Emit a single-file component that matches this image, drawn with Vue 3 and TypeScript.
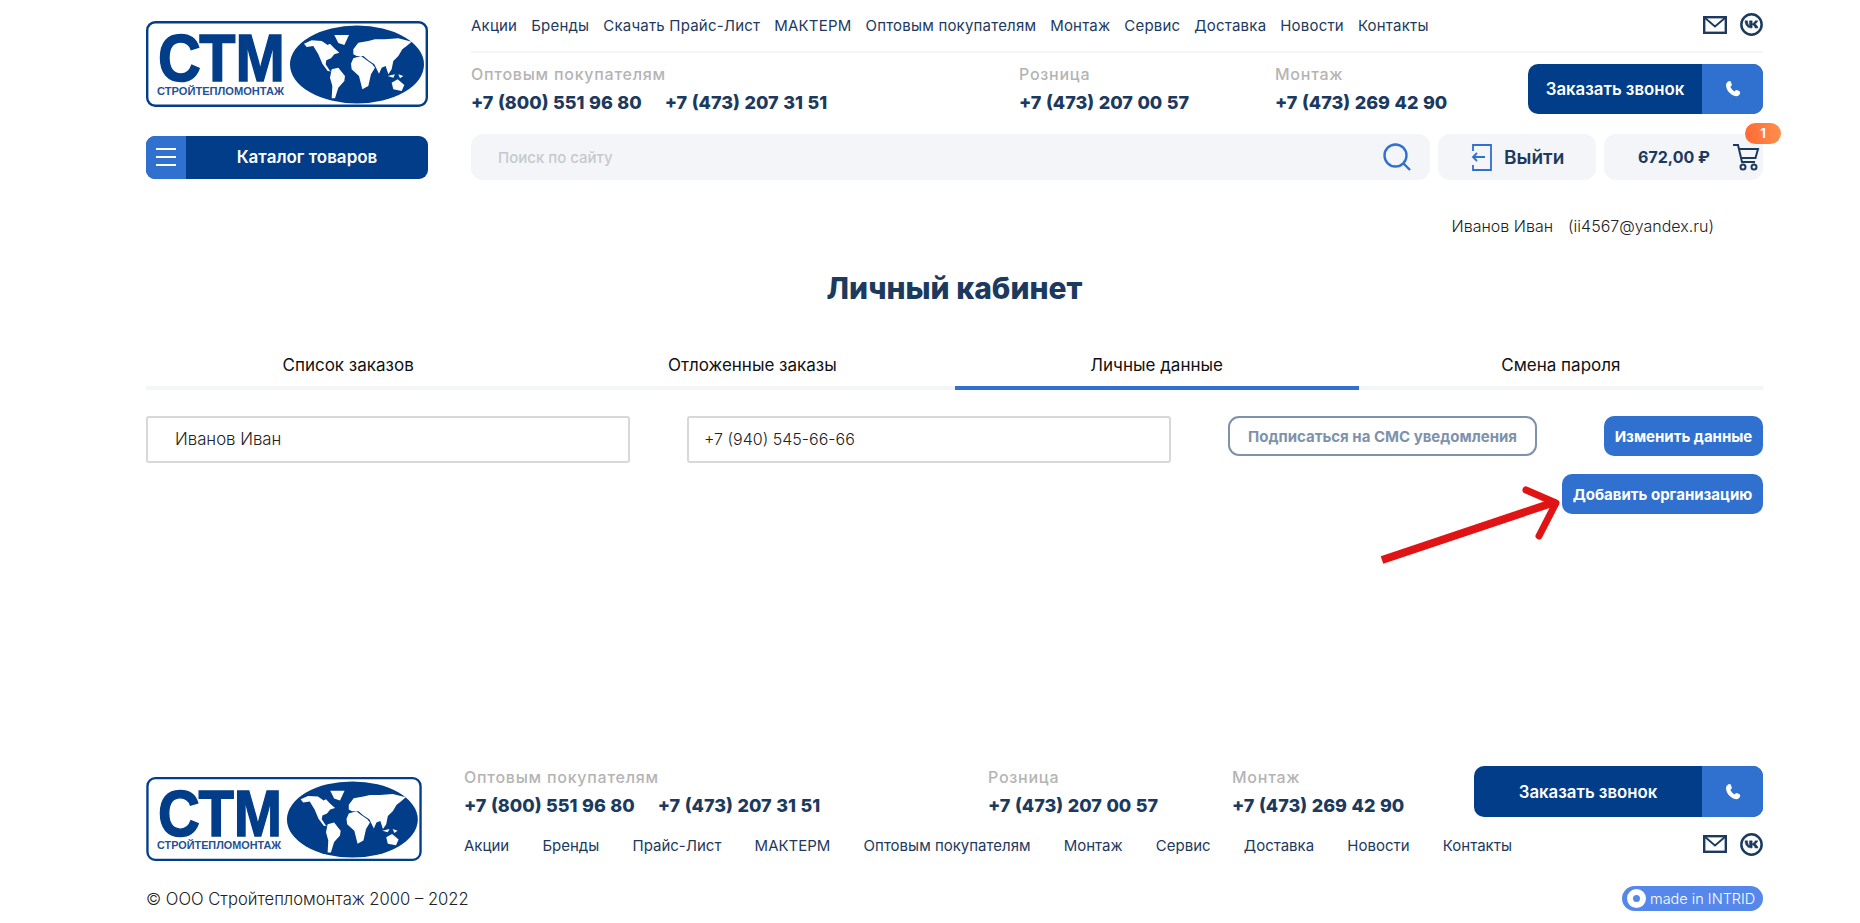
<script setup lang="ts">
const topNav = ['Акции', 'Бренды', 'Скачать Прайс-Лист', 'МАКТЕРМ', 'Оптовым покупателям', 'Монтаж', 'Сервис', 'Доставка', 'Новости', 'Контакты'];
const footNav = ['Акции', 'Бренды', 'Прайс-Лист', 'МАКТЕРМ', 'Оптовым покупателям', 'Монтаж', 'Сервис', 'Доставка', 'Новости', 'Контакты'];
const tabs = ['Список заказов', 'Отложенные заказы', 'Личные данные', 'Смена пароля'];
const activeTab = 2;
</script>

<template>
<div class="page">
  <svg class="defs" aria-hidden="true">
    <symbol id="mail" viewBox="0 0 24 18">
      <rect x="1.200" y="1.200" width="21.600" height="15.600" fill="none" stroke="#1c3a5e" stroke-width="2.400" />
      <path d="M1.500 1.500 12 10.500 22.500 1.500" fill="none" stroke="#1c3a5e" stroke-width="1.800" />
    </symbol>
    <symbol id="vk" viewBox="0 0 24 24">
      <circle cx="12" cy="12" r="10.600" fill="none" stroke="#1c3a5e" stroke-width="2.600" />
      <path d="M5.200 8.200c.3 4.900 2.700 7.500 6.900 7.500h.6V12.300c1.400.2 2.500 1.500 3.100 3.400h3c-.6-2.500-2-3.600-3-4.100 1-.6 2.300-1.800 2.800-3.400h-2.800c-.5 1.500-1.600 2.700-3.100 3V8.200H9.900v5.200c-1.300-.4-1.900-2.600-2-5.200z" fill="#1c3a5e" stroke="#1c3a5e" stroke-width=".5" />
    </symbol>
    <symbol id="phone" viewBox="0 0 18 18">
      <path d="M4.600 1.200c1.200-.5 2 .1 2.400 1.100l.7 1.900c.3.800.1 1.400-.5 1.900l-.8.700c.7 1.800 2.300 3.700 4.200 4.600l.9-.9c.5-.5 1.200-.6 1.800-.3l1.800.9c1 .5 1.300 1.300.9 2.300-.7 1.800-2.200 3-4 2.800C7 15.600 2.300 10.500 2 5.500c-.1-1.900 1-3.600 2.600-4.300z" fill="#fff" />
    </symbol>
  </svg>

  <header class="head">
    <div class="head-top">
      <svg class="logo" viewBox="0 0 282 86">
        <g id="logo">
          <rect x="1.2" y="1.2" width="279.6" height="83.6" rx="8" fill="#fff" stroke="#023d89" stroke-width="2.4" />
          <text x="12" y="60" class="logo-big" textLength="127" lengthAdjust="spacingAndGlyphs">СТМ</text>
          <text x="11" y="74" class="logo-small" textLength="127" lengthAdjust="spacingAndGlyphs">СТРОЙТЕПЛОМОНТАЖ</text>
          <ellipse cx="211" cy="43.500" rx="67" ry="39" fill="#023d89" />
          <g transform="translate(139 0) scale(.3333)" fill="#fff">
            <polygon points="57,68 80,58 110,60 128,72 135,68 148,82 163,95 148,100 138,112 124,118 122,130 135,150 143,152 128,150 112,128 100,100 85,75 65,78" />
            <polygon points="148,42 192,42 178,72 160,66" />
            <polygon points="140,145 160,140 180,165 178,180 160,200 150,232 140,232 142,195 135,170" />
            <polygon points="205,112 228,105 245,118 262,130 270,140 258,160 250,195 232,205 222,165 200,145 198,128" />
            <polygon points="205,85 220,65 250,60 270,55 300,55 340,52 380,62 365,75 352,85 340,105 325,120 320,145 310,160 302,135 290,140 282,158 268,130 250,118 235,105 215,105 205,100" />
            <polygon points="308,165 330,160 325,170" />
            <polygon points="340,160 355,165 345,172" />
            <polygon points="320,185 338,175 358,192 350,210 325,205" />
          </g>
        </g>
      </svg>
      <div class="head-info">
        <div class="nav-row">
          <nav class="top-nav">
            <a v-for="item in topNav" :key="item">{{ item }}</a>
          </nav>
          <div class="socials">
            <svg class="ic-mail"><use href="#mail" /></svg>
            <svg class="ic-vk"><use href="#vk" /></svg>
          </div>
        </div>
        <div class="contacts">
          <div class="contact c1">
            <span class="lbl">Оптовым покупателям</span>
            <div class="phones"><b>+7 (800) 551 96 80</b><b>+7 (473) 207 31 51</b></div>
          </div>
          <div class="contact c2">
            <span class="lbl">Розница</span>
            <div class="phones"><b>+7 (473) 207 00 57</b></div>
          </div>
          <div class="contact c3">
            <span class="lbl">Монтаж</span>
            <div class="phones"><b>+7 (473) 269 42 90</b></div>
          </div>
          <button class="call">
            <span class="call-text">Заказать звонок</span>
            <span class="call-ic"><svg><use href="#phone" /></svg></span>
          </button>
        </div>
      </div>
    </div>

    <div class="head-bottom">
      <button class="catalog">
        <span class="burger"><i></i><i></i><i></i></span>
        <span class="catalog-text">Каталог товаров</span>
      </button>
      <div class="search">
        <span>Поиск по сайту</span>
        <svg width="30" height="30" viewBox="0 0 30 30" fill="none" stroke="#3070ce" stroke-width="2.400">
          <circle cx="13.500" cy="13.500" r="11" />
          <path d="M21.500 21.500 28 28" />
        </svg>
      </div>
      <div class="grey-box logout">
        <svg width="22" height="28" viewBox="0 0 22 28" fill="none" stroke="#3070ce" stroke-width="1.800">
          <path d="M2 8V2h18v25H2v-5" />
          <path d="M14 14H2M6 10l-4 4 4 4" />
        </svg>
        <span>Выйти</span>
      </div>
      <div class="grey-box cart">
        <span class="sum">672,00 ₽</span>
        <svg width="28" height="28" viewBox="0 0 28 28" fill="none" stroke="#1c3a5e" stroke-width="2">
          <path d="M1 2h5l4 17h13" />
          <path d="M7 6h19l-2.500 9H9" />
          <circle cx="11" cy="24" r="2.500" />
          <circle cx="22" cy="24" r="2.500" />
        </svg>
        <span class="badge">1</span>
      </div>
    </div>
  </header>

  <main class="main">
    <div class="user"><span>Иванов Иван</span><span>(ii4567@yandex.ru)</span></div>
    <h1>Личный кабинет</h1>
    <div class="tabs">
      <div
        v-for="(tab, i) in tabs" :key="tab"
        :class="i === activeTab ? 'tab tab_active' : 'tab'"
      >{{ tab }}</div>
    </div>
    <div class="form">
      <div class="field field-name">Иванов Иван</div>
      <div class="field field-phone">+7 (940) 545-66-66</div>
      <button class="sms">Подписаться на СМС уведомления</button>
      <div class="actions">
        <button class="btn btn-change">Изменить данные</button>
        <button class="btn btn-add">Добавить организацию</button>
        <svg class="arrow" width="190" height="85" viewBox="0 0 190 85" fill="none" stroke="#e01414" stroke-linecap="round">
          <path d="M2 75 172 18" stroke-width="8" stroke-linecap="butt" />
          <path d="M146 5 176 18 159 51" stroke-width="7" stroke-linejoin="round" />
        </svg>
      </div>
    </div>
  </main>

  <footer class="foot">
    <div class="foot-top">
      <svg class="logo-foot" viewBox="0 0 282 86"><use href="#logo" /></svg>
      <div class="foot-info">
        <div class="contacts contacts-foot">
          <div class="contact c1">
            <span class="lbl">Оптовым покупателям</span>
            <div class="phones"><b>+7 (800) 551 96 80</b><b>+7 (473) 207 31 51</b></div>
          </div>
          <div class="contact c2">
            <span class="lbl">Розница</span>
            <div class="phones"><b>+7 (473) 207 00 57</b></div>
          </div>
          <div class="contact c3">
            <span class="lbl">Монтаж</span>
            <div class="phones"><b>+7 (473) 269 42 90</b></div>
          </div>
          <button class="call">
            <span class="call-text">Заказать звонок</span>
            <span class="call-ic"><svg><use href="#phone" /></svg></span>
          </button>
        </div>
        <div class="foot-nav-row">
          <nav class="foot-nav">
            <a v-for="item in footNav" :key="item">{{ item }}</a>
          </nav>
          <div class="socials">
            <svg class="ic-mail"><use href="#mail" /></svg>
            <svg class="ic-vk"><use href="#vk" /></svg>
          </div>
        </div>
      </div>
    </div>
    <div class="foot-bottom">
      <span class="copy">© ООО Стройтепломонтаж 2000 – 2022</span>
      <span class="intrid"><i></i>made in INTRID</span>
    </div>
  </footer>
</div>
</template>

<style>
html, body {
  background: #fff;
  overflow: hidden;
}

/* the footer logo reuses these through <use>, scoped selectors don't reach it */
.logo-big {
  font: 700 67px "Liberation Sans", sans-serif;
  fill: #023d89;
  stroke: #023d89;
  stroke-width: 1.500px;
}

.logo-small {
  font: 700 11px "Liberation Sans", sans-serif;
  fill: #1f5296;
}
</style>

<style scoped>
.page {
  width: 1617px;
  height: 923px;
  margin-left: 146px;
  font-family: Inter, "Noto Sans", sans-serif;
  color: #1c3a5e;
  display: flex;
  flex-direction: column;
}

.defs {
  position: absolute;
  width: 0;
  height: 0;
}

button {
  font-family: inherit;
  border: 0;
  padding: 0;
}

.head-top {
  display: flex;
  gap: 43px;
}

.logo {
  width: 282px;
  height: 86px;
  margin-top: 21px;
  flex: none;
}

.head-info {
  flex: 1;
}

.nav-row {
  height: 51px;
  border-bottom: 2px solid #f3f5f8;
  display: flex;
  justify-content: space-between;
  align-items: center;
}

.top-nav {
  display: flex;
  gap: 14px;
  font-size: 15px;
  letter-spacing: .2px;
}

.socials {
  display: flex;
  align-items: center;
  gap: 13px;
  padding-bottom: 2px;
}

.ic-mail {
  width: 24px;
  height: 18px;
}

.ic-vk {
  width: 23px;
  height: 23px;
}

.contacts {
  display: flex;
  margin-top: 11px;
}

.contact {
  display: flex;
  flex-direction: column;
  gap: 8px;
}

.c1 { width: 548px; }
.c2 { width: 256px; }
.c3 { flex: 1; }

.lbl {
  color: #b4b4b4;
  font-size: 16px;
  font-weight: 500;
  line-height: 20px;
  letter-spacing: .75px;
}

.phones {
  display: flex;
  gap: 23px;
  font-size: 18px;
  line-height: 22px;
  word-spacing: .6px;
  white-space: nowrap;
}

.phones b {
  font-weight: 800;
}

.call {
  width: 235px;
  height: 50px;
  display: flex;
  border-radius: 10px;
  overflow: hidden;
  color: #fff;
  font-size: 16.800px;
  font-weight: 600;
  background: #023d89;
}

.call-text {
  flex: 1;
  align-self: center;
}

.call-ic {
  width: 61px;
  background: #3070ce;
  display: flex;
  align-items: center;
  justify-content: center;
}

.call-ic svg {
  width: 18px;
  height: 18px;
}

.head-bottom {
  display: flex;
  margin-top: 20px;
  height: 46px;
  align-items: center;
}

.catalog {
  width: 282px;
  height: 43px;
  margin-right: 43px;
  display: flex;
  border-radius: 9px;
  overflow: hidden;
  background: #023d89;
  color: #fff;
  font-size: 17px;
  font-weight: 600;
}

.burger {
  width: 40px;
  background: #3070ce;
  display: flex;
  flex-direction: column;
  align-items: center;
  justify-content: center;
  gap: 6px;
}

.burger i {
  width: 20px;
  height: 2px;
  background: #fff;
}

.catalog-text {
  flex: 1;
  align-self: center;
}

.search {
  width: 959px;
  height: 46px;
  margin-right: 8px;
  padding: 0 18px 0 27px;
  box-sizing: border-box;
  background: #f3f5f8;
  border-radius: 12px;
  display: flex;
  align-items: center;
  justify-content: space-between;
  color: #c5c9cf;
  font-size: 15px;
  font-weight: 500;
}

.grey-box {
  height: 46px;
  background: #f3f5f8;
  border-radius: 12px;
  display: flex;
  align-items: center;
  box-sizing: border-box;
  position: relative;
}

.logout {
  width: 158px;
  margin-right: 8px;
  padding-left: 33px;
  gap: 11px;
  font-size: 19px;
  font-weight: 600;
}

.cart {
  width: 159px;
  padding-left: 34px;
  gap: 22px;
}

.sum {
  font-size: 16px;
  font-weight: 700;
  white-space: nowrap;
}

.badge {
  position: absolute;
  top: -11px;
  right: -18px;
  width: 36px;
  height: 21px;
  border-radius: 11px;
  background: linear-gradient(90deg, #ff6a33, #ff8f4d);
  color: #fff;
  font-size: 13px;
  font-weight: 700;
  text-align: center;
  line-height: 21px;
}

.main {
  flex: 1;
}

.user {
  margin-top: 36px;
  padding-right: 49px;
  display: flex;
  justify-content: flex-end;
  gap: 15px;
  font-size: 16px;
  line-height: 20px;
  font-weight: 300;
  color: #222;
}

h1 {
  margin: 34px 0 0;
  text-align: center;
  font-size: 30px;
  line-height: 36px;
  font-weight: 800;
  color: #1c3a5e;
}

.tabs {
  display: grid;
  grid-template-columns: repeat(4, 1fr);
  margin-top: 39px;
  border-bottom: 4px solid #f4f5f6;
}

.tab {
  height: 41px;
  margin-bottom: -4px;
  border-bottom: 4px solid transparent;
  text-align: center;
  color: #111;
  font-size: 17px;
  line-height: 40px;
}

.tab_active {
  border-bottom-color: #3070ce;
}

.form {
  display: flex;
  margin-top: 26px;
  align-items: flex-start;
}

.field {
  width: 484px;
  height: 47px;
  box-sizing: border-box;
  border: 2px solid #d8d8d8;
  border-radius: 3px;
  font-weight: 300;
  line-height: 43px;
  color: #222;
}

.field-name {
  padding-left: 27px;
  margin-right: 57px;
  font-size: 16.800px;
}

.field-phone {
  padding-left: 15px;
  margin-right: 57px;
  font-size: 16px;
}

.sms {
  width: 309px;
  height: 40px;
  box-sizing: border-box;
  border: 2px solid #7e92ac;
  border-radius: 11px;
  background: #fff;
  color: #7e92ac;
  font-size: 15px;
  font-weight: 700;
}

.actions {
  flex: 1;
  display: flex;
  flex-direction: column;
  align-items: flex-end;
  gap: 18px;
  position: relative;
}

.btn {
  height: 40px;
  border-radius: 10px;
  background: #3070ce;
  color: #fff;
  font-size: 15px;
  font-weight: 700;
}

.btn-change {
  width: 159px;
}

.btn-add {
  width: 201px;
}

.arrow {
  position: absolute;
  left: -157px;
  top: 69px;
}

.foot {
  flex: none;
  padding-bottom: 12px;
}

.foot-top {
  display: flex;
  gap: 42px;
}

.logo-foot {
  width: 276px;
  height: 84px;
  margin-top: 11px;
  flex: none;
}

.foot-info {
  flex: 1;
}

.contacts-foot {
  margin-top: 0;
}

.contacts-foot .contact {
  padding-top: 1px;
}

.contacts-foot .c1 { width: 524px; }
.contacts-foot .c2 { width: 244px; }
.contacts-foot .call { width: 289px; height: 51px; }

.foot-nav-row {
  display: flex;
  justify-content: space-between;
  align-items: center;
  margin-top: 14px;
  height: 28px;
}

.foot-nav {
  display: flex;
  gap: 33.200px;
  font-size: 15px;
}

.foot-bottom {
  display: flex;
  justify-content: space-between;
  align-items: center;
  margin-top: 25px;
  height: 25px;
}

.copy {
  font-size: 16.600px;
  font-weight: 300;
  color: #222;
}

.intrid {
  width: 141px;
  height: 25px;
  display: flex;
  align-items: center;
  gap: 4px;
  padding-left: 5px;
  box-sizing: border-box;
  border-radius: 13px;
  background: #5588ea;
  color: #fff;
  font-size: 14.500px;
  font-weight: 300;
  white-space: nowrap;
}

.intrid i {
  width: 7px;
  height: 7px;
  border: 6px solid #fff;
  border-radius: 50%;
  background: #5588ea;
  flex: none;
}
</style>
